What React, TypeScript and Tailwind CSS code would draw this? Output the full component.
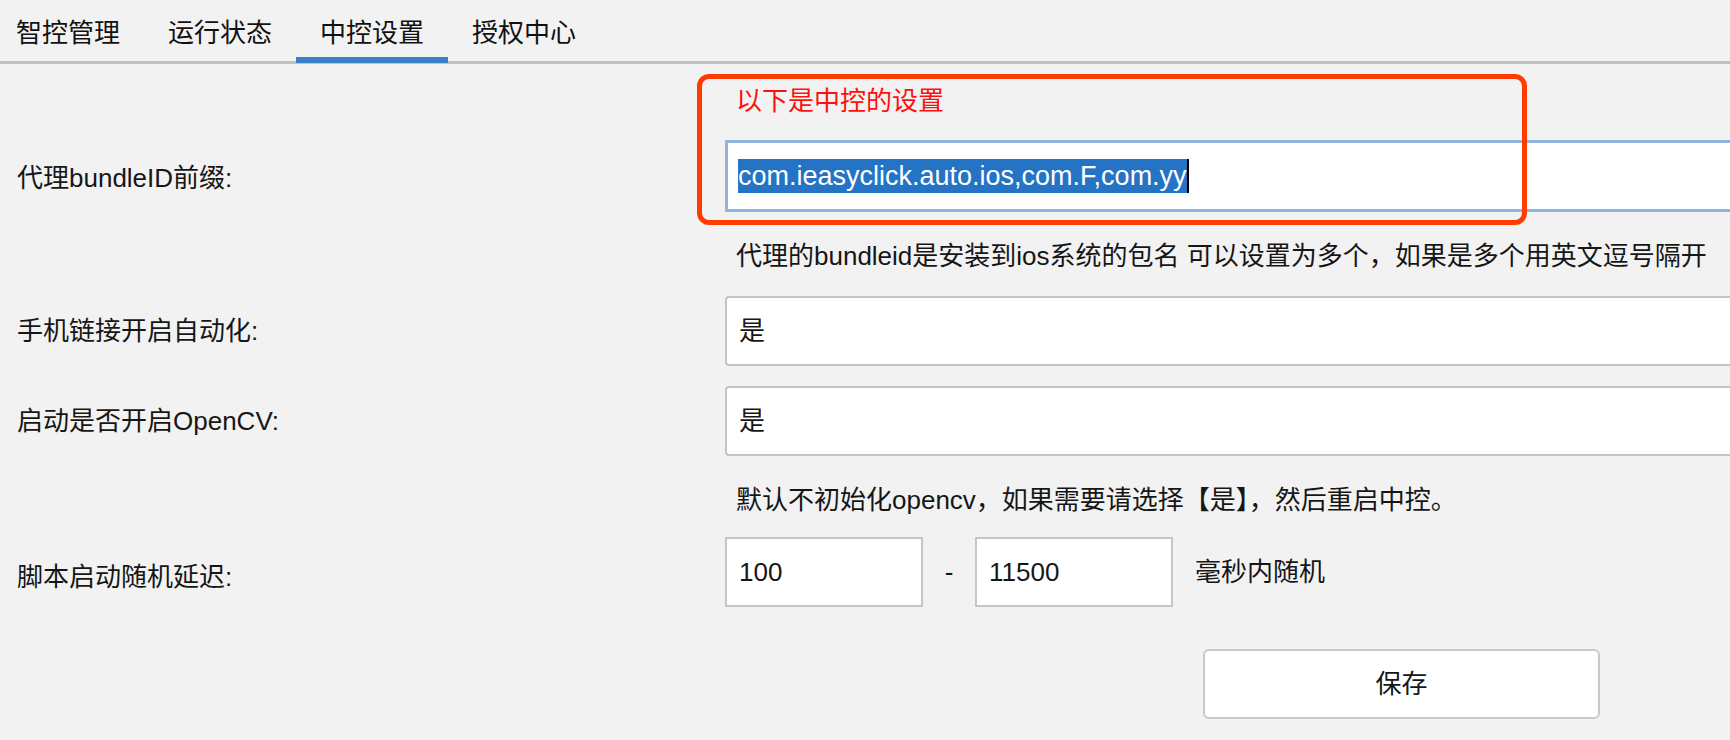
import React from "react";

const tabs = ["智控管理", "运行状态", "中控设置", "授权中心"];

function Row({ label, children, className = "", labelClass = "" }: { label?: string; children: React.ReactNode; className?: string; labelClass?: string }) {
  return (
    <div className={`flex items-center ${className}`}>
      <div className={`w-[725px] shrink-0 pl-[17px] ${labelClass}`}>{label}</div>
      {children}
    </div>
  );
}

export default function App() {
  return (
    <div className="relative w-[1730px] h-[740px] overflow-hidden bg-[#f2f2f2] text-[26px] leading-[34px] text-[#161616] font-['Liberation_Sans','Noto_Sans_CJK_SC',sans-serif]">
      {/* tab bar */}
      <div className="flex h-[64px] border-b-[3px] border-[#c2c2c2]">
        <div className="flex -ml-[8px]">
          {tabs.map((t, i) => (
            <div key={t} className="relative w-[152px] flex items-center justify-center pt-[4px] text-[#111]">
              {t}
              {i === 2 && <div className="absolute left-0 right-0 bottom-[-2px] h-[6px] bg-[#3a80c6]" />}
            </div>
          ))}
        </div>
      </div>

      {/* form */}
      <div className="flex flex-col">
        <Row className="mt-[20px]">
          <div className="pl-[11px] text-[#ff0f0f]">以下是中控的设置</div>
        </Row>

        <Row label="代理bundleID前缀:" className="mt-[22px]" labelClass="mt-[4px]">
          <div className="w-[1030px] h-[72px] shrink-0 border-[3px] border-[#8db5dd] bg-white flex items-center pl-[10px]">
            <span className="bg-[#2473c5] text-white text-[27px] leading-[34px] whitespace-nowrap">com.ieasyclick.auto.ios,com.F,com.yy</span>
            <span className="w-[2px] h-[34px] bg-black" />
          </div>
        </Row>

        <Row className="mt-[27px]">
          <div className="pl-[11px] whitespace-nowrap">代理的bundleid是安装到ios系统的包名 可以设置为多个，如果是多个用英文逗号隔开</div>
        </Row>

        <Row label="手机链接开启自动化:" className="mt-[23px]">
          <div className="w-[1030px] h-[70px] shrink-0 border-2 border-[#c4c4c4] rounded-[4px] bg-white flex items-center pl-[12px]">是</div>
        </Row>

        <Row label="启动是否开启OpenCV:" className="mt-[20px]">
          <div className="w-[1030px] h-[70px] shrink-0 border-2 border-[#c4c4c4] rounded-[4px] bg-white flex items-center pl-[12px]">是</div>
        </Row>

        <Row className="mt-[27px]">
          <div className="pl-[11px] whitespace-nowrap">默认不初始化opencv，如果需要请选择【是】，然后重启中控。</div>
        </Row>

        <Row label="脚本启动随机延迟:" className="mt-[20px]" labelClass="mt-[10px]">
          <div className="flex items-center">
            <div className="w-[198px] h-[70px] border-2 border-[#c6c6c6] bg-white flex items-center pl-[12px]">100</div>
            <div className="w-[52px] text-center">-</div>
            <div className="w-[198px] h-[70px] border-2 border-[#c6c6c6] bg-white flex items-center pl-[12px]">11500</div>
            <div className="ml-[22px] whitespace-nowrap">毫秒内随机</div>
          </div>
        </Row>

        <Row className="mt-[42px]">
          <div className="ml-[478px] w-[397px] h-[70px] border-2 border-[#c8c8c8] rounded-[6px] bg-white flex items-center justify-center">保存</div>
        </Row>
      </div>

      {/* annotation box */}
      <div className="absolute left-[697px] top-[74px] w-[830px] h-[151px] border-[5px] border-[#ff3c00] rounded-[12px]" />
    </div>
  );
}
